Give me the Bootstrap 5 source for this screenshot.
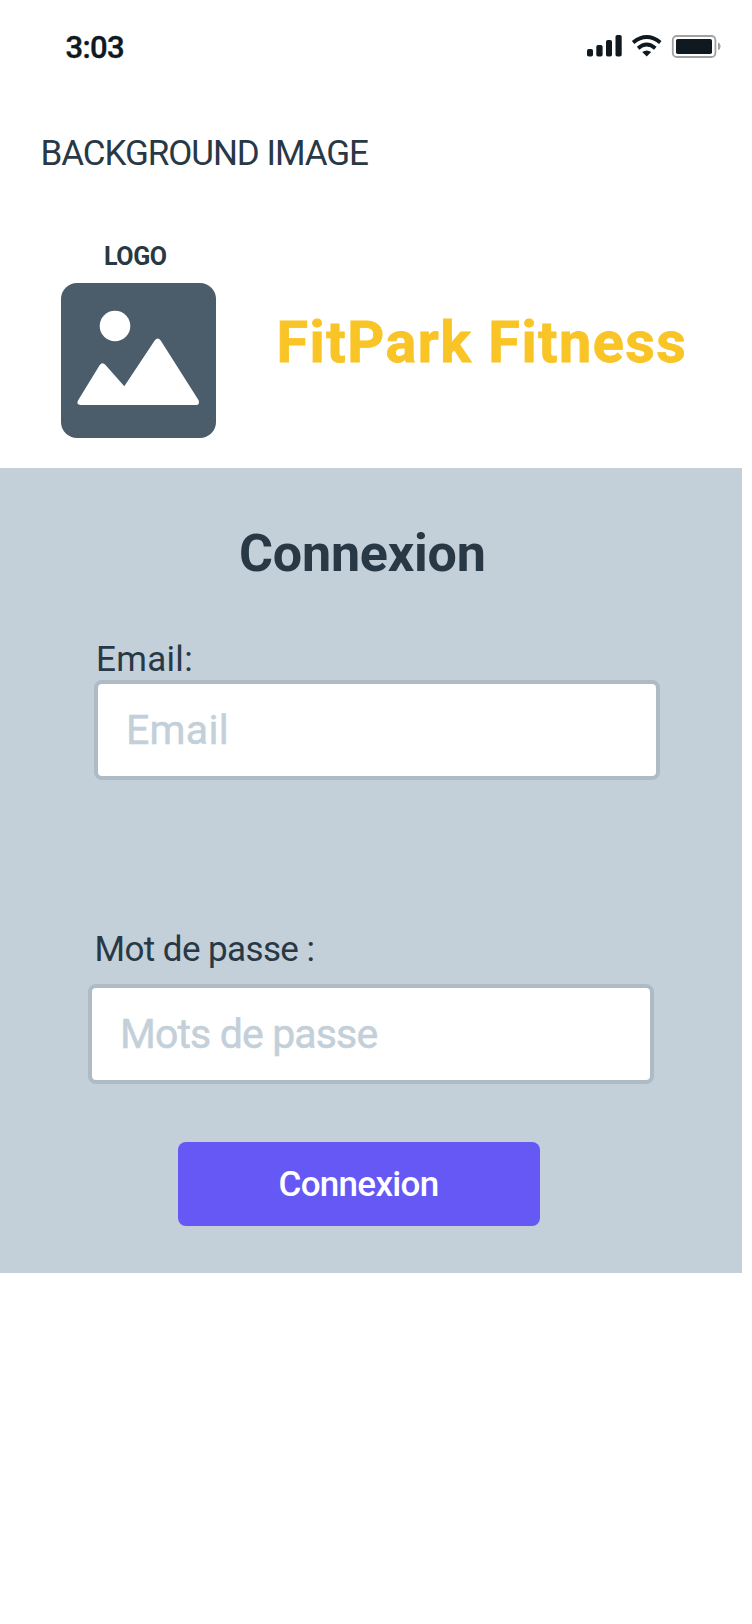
<!DOCTYPE html>
<html lang="fr">
<head>
<meta charset="utf-8">
<meta name="viewport" content="width=device-width, initial-scale=1">
<title>FitPark Fitness</title>
<link rel="stylesheet" href="https://cdn.jsdelivr.net/npm/bootstrap@5.3.0/dist/css/bootstrap.min.css">
<style>
body{font-family:Roboto,"Liberation Sans",sans-serif;color:#293845;background:#fff;min-height:1624px}
.status{height:94px;padding:0 30px 0 65.5px;color:#101820}
.clock{font-size:31px;font-weight:500;letter-spacing:-.6px;line-height:96px;-webkit-text-stroke:.4px}
.status-icons{margin-top:32px}
.bg-label{font-size:35px;line-height:56px;letter-spacing:-1.05px;margin:32px 0 0 40.5px}
.brand{height:286px;padding-left:61px}
.brand-mark{width:155px;padding-top:59px}
.logo-label{font-size:25px;font-weight:700;line-height:30px;letter-spacing:-.4px;margin-bottom:11px;padding:1px 0 0 43px;height:31px}
.brand-name{font-size:57.5px;font-weight:700;line-height:70px;letter-spacing:1.5px;color:#f9c426;margin:126px 0 0 60.5px;-webkit-text-stroke:.8px}
.login{width:742px;height:804.7px;background:#c3cfd9}
.login-title{font-size:52px;font-weight:700;line-height:60px;letter-spacing:-.2px;margin:0 0 0 239px;padding-top:55.5px}
.field-label{display:block;font-size:35px;line-height:42px}
.field{width:566px;height:100px;border:4px solid #adbbc7;border-radius:8px;font-size:41px;padding:0 28px;color:#293845}
.field::placeholder{color:#c3cfd9;opacity:1;-webkit-text-stroke:.5px}
.email-label{margin:55px 0 0 96px;letter-spacing:.3px;height:41.5px}
.email-field{margin-left:94px;letter-spacing:.3px}
.pass-label{margin:148.5px 0 0 94.5px;letter-spacing:-.6px;height:55.5px}
.pass-field{margin-left:88px;letter-spacing:-.85px}
.submit{display:block;width:362px;height:84px;margin:58px 0 0 178px;padding:1px 1px 0 0;border:0;border-radius:8px;background:#6558f5;color:#fff;font-size:35px;font-weight:500;letter-spacing:-.7px;line-height:84px}
</style>
</head>
<body>
<header class="status d-flex justify-content-between align-items-start">
  <span class="clock">3:03</span>
  <svg class="status-icons" width="136" height="28" viewBox="586 32 136 28">
    <g fill="#101820">
      <rect x="587" y="49" width="6" height="7.5" rx="1.8"/>
      <rect x="596.3" y="45" width="6.3" height="11.5" rx="1.8"/>
      <rect x="606" y="40" width="6" height="16.5" rx="1.8"/>
      <rect x="615.5" y="35" width="6.2" height="21.5" rx="1.8"/>
      <path d="M646.7 56.5 642.2 52Q646.7 48.8 651.2 52Z"/>
    </g>
    <g fill="none" stroke="#101820" stroke-width="3.8">
      <path d="M633.1 42.5Q646.7 31.5 660.3 42.5"/>
      <path d="M638.1 48.2Q646.7 40.8 655.3 48.2"/>
    </g>
    <rect x="672.8" y="36" width="42.6" height="21" rx="4" fill="#fff" stroke="#a1a2a4" stroke-width="1.8"/>
    <rect x="676" y="39" width="36" height="15" rx="1.8" fill="#101820"/>
    <path d="M718 42.3Q720.6 43.2 720.6 46.2T718 50.3Z" fill="#a1a2a4"/>
  </svg>
</header>
<div class="bg-label">BACKGROUND IMAGE</div>
<section class="brand d-flex align-items-start">
  <div class="brand-mark flex-shrink-0">
    <div class="logo-label">LOGO</div>
    <svg class="d-block" width="155" height="155" viewBox="0 0 155 155">
      <rect width="155" height="155" rx="16" fill="#4b5c6b"/>
      <circle cx="54" cy="43" r="15.3" fill="#fff"/>
      <path d="M17 117.4 38.6 82.2Q41.2 78.4 44.3 81.8L63.3 103.2 93.7 57.5Q96.7 53.4 99.7 57.5L137.6 117.2Q139.2 121.9 135 121.9H19.5Q15 121.6 17 117.4Z" fill="#fff"/>
    </svg>
  </div>
  <h1 class="brand-name text-nowrap">FitPark Fitness</h1>
</section>
<form class="login">
  <h2 class="login-title">Connexion</h2>
  <label class="field-label email-label" for="email">Email:</label>
  <input class="field email-field d-block" id="email" type="email" placeholder="Email">
  <label class="field-label pass-label" for="password">Mot de passe :</label>
  <input class="field pass-field d-block" id="password" type="password" placeholder="Mots de passe">
  <button class="btn submit" type="button">Connexion</button>
</form>
<script src="https://cdn.jsdelivr.net/npm/bootstrap@5.3.0/dist/js/bootstrap.bundle.min.js"></script>
</body>
</html>
